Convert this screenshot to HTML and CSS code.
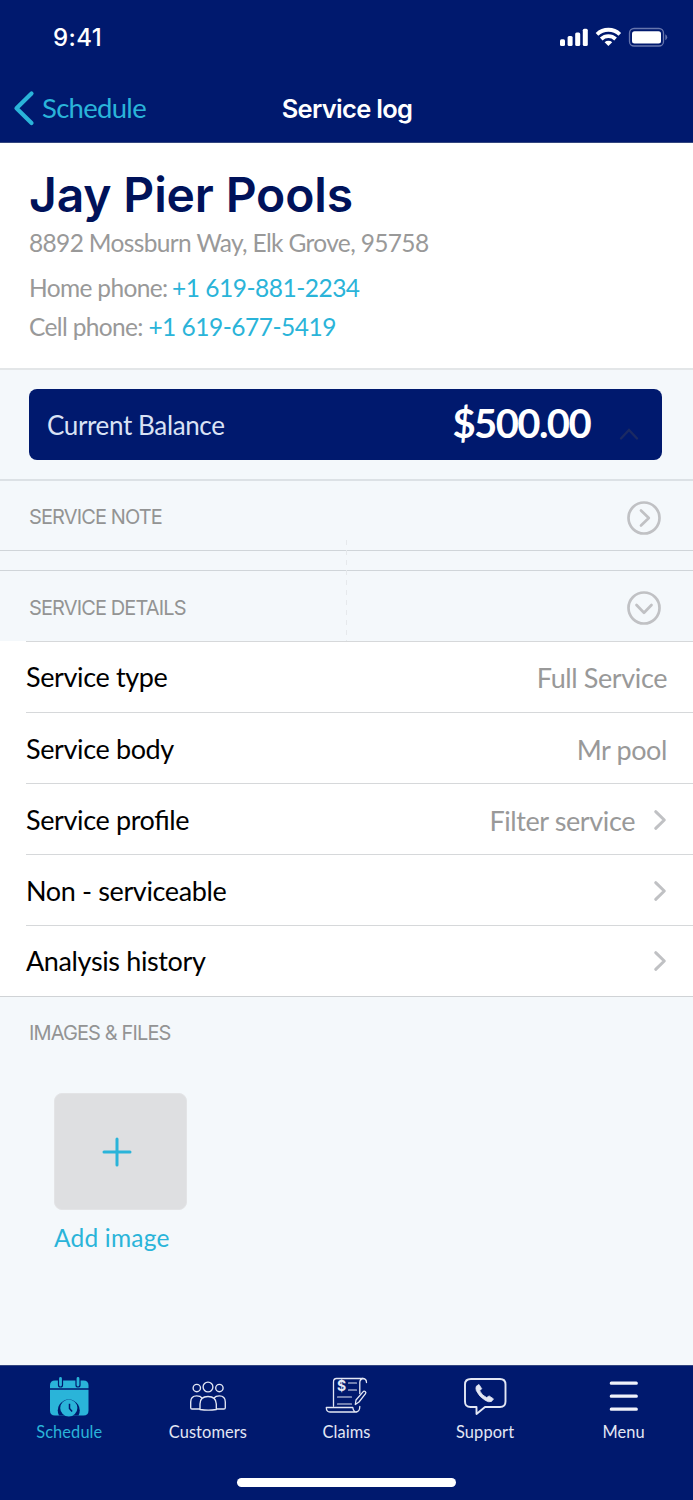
FILE: index.html
```html
<!DOCTYPE html>
<html lang="en">
<head>
<meta charset="utf-8">
<title>Service log</title>
<link rel="stylesheet" href="styles.css">
</head>
<body>
<div class="app">
  <header class="header">
    <div class="status">
      <span class="clock">9:41</span>
      <svg class="status-icons" width="112" height="22" viewBox="0 0 112 22" fill="#fff">
        <rect x="4" y="13.3" width="5" height="6.7" rx="1.5"/><rect x="11.6" y="10" width="5" height="10" rx="1.5"/><rect x="19.2" y="6.5" width="5" height="13.5" rx="1.5"/><rect x="26.8" y="2.7" width="5" height="17.3" rx="1.5"/>
        <g fill="none" stroke="#fff" stroke-width="3.8"><path d="M41 8.3a16.5 16.5 0 0 1 22.8 0"/><path d="M45.2 13a10.5 10.5 0 0 1 14.4 0"/></g>
        <path d="M48.6 16.3a5.6 5.6 0 0 1 7.6 0l-3.8 3.7z"/>
        <rect x="73.5" y="2.5" width="34" height="17.5" rx="4.5" fill="none" stroke="#6675ad" stroke-width="1.3"/><rect x="76" y="5.2" width="29" height="12.2" rx="2.5"/><path d="M109.3 8.3q1.9 1 1.9 3t-1.9 3z" fill="#6675ad"/>
      </svg>
    </div>
    <nav class="nav">
      <a class="back"><svg width="22" height="36" viewBox="0 0 22 36"><path d="M18.5 3.5 3.5 18.3 18.5 33" fill="none" stroke="#2ab4d9" stroke-width="4.2" stroke-linecap="round" stroke-linejoin="round"/></svg><span class="back-label">Schedule</span></a>
      <h1 class="title">Service log</h1>
    </nav>
  </header>

  <section class="customer">
    <h2 class="name">Jay Pier Pools</h2>
    <p class="line address">8892 Mossburn Way, Elk Grove, 95758</p>
    <p class="line home"><span>Home phone:</span> <a class="tel">+1 619-881-2234</a></p>
    <p class="line cell"><span>Cell phone:</span> <a class="tel">+1 619-677-5419</a></p>
  </section>

  <section class="balance-wrap">
    <div class="balance">
      <span class="balance-label">Current Balance</span>
      <span class="amount">$500.00</span>
      <svg class="balance-caret" width="22" height="14" viewBox="0 0 22 14"><path d="M3 11.5 11 3l8 8.5" fill="none" stroke="#1b2a63" stroke-width="2.4" stroke-linecap="round"/></svg>
    </div>
  </section>

  <section class="group note">
    <h3 class="caption">SERVICE NOTE</h3>
    <svg width="34" height="34" viewBox="0 0 34 34" class="round"><circle cx="17" cy="17" r="15.5"/><path d="m14 9.500 7.800 7.500-7.800 7.500"/></svg>
  </section>
  <div class="gap"></div>
  <section class="group details">
    <h3 class="caption">SERVICE DETAILS</h3>
    <svg width="34" height="34" viewBox="0 0 34 34" class="round"><circle cx="17" cy="17" r="15.5"/><path d="m9.500 14 7.500 7.800 7.500-7.800"/></svg>
    <i class="guide"></i>
  </section>

  <ul class="rows">
    <li class="row"><span class="key">Service type</span><span class="value">Full Service</span></li>
    <li class="row mid"><span class="key">Service body</span><span class="value">Mr pool</span></li>
    <li class="row mid"><span class="key">Service profile</span><span class="value">Filter service</span><svg class="chev" width="14" height="22" viewBox="0 0 14 22"><path d="m2.700 2.700 8.600 8.300-8.600 8.300"/></svg></li>
    <li class="row mid"><span class="key">Non - serviceable</span><svg class="chev" width="14" height="22" viewBox="0 0 14 22"><path d="m2.700 2.700 8.600 8.300-8.600 8.300"/></svg></li>
    <li class="row"><span class="key">Analysis history</span><svg class="chev" width="14" height="22" viewBox="0 0 14 22"><path d="m2.700 2.700 8.600 8.300-8.600 8.300"/></svg></li>
  </ul>

  <section class="files">
    <h3 class="caption">IMAGES &amp; FILES</h3>
    <div class="tile"><svg width="30" height="30" viewBox="0 0 30 30"><path d="M15 2v26M2 15h26" stroke="#2ab4d9" stroke-width="3" stroke-linecap="round"/></svg></div>
    <a class="add">Add image</a>
  </section>

  <footer class="tabbar">
    <div class="tabs">
      <div class="tab active">
        <svg class="icon" width="46" height="44" viewBox="0 0 46 44">
          <path d="M9 5.500h28.500q5 0 5 5V13.300H4V10.500q0-5 5-5z" fill="#2ab4d9"/><path d="M4 14.800h38.500V35.500q0 5-5 5H9q-5 0-5-5z" fill="#2ab4d9"/>
          <g stroke-linecap="round"><path d="M14.500 3.500v6.500M32 3.500v6.500" stroke="#00196e" stroke-width="5.200"/><path d="M14.500 3.500v6.500M32 3.500v6.500" stroke="#2ab4d9" stroke-width="2.800"/></g>
          <path d="M13 40.600a11 11 0 1 1 19.500 0z" fill="#00196e"/><circle cx="22.800" cy="33" r="8.600" fill="#2ab4d9"/><path d="M23.500 28.700v4.800l2.600 3" fill="none" stroke="#00196e" stroke-width="1.500"/>
        </svg>
        <span class="tab-label">Schedule</span>
      </div>
      <div class="tab">
        <svg class="icon" width="46" height="44" viewBox="0 0 46 44" fill="none" stroke="#e3e7f4" stroke-width="1.350">
          <circle cx="23" cy="12" r="4.900"/><circle cx="11.800" cy="13" r="3.700"/><circle cx="34.400" cy="13" r="3.700"/>
          <path d="M15 34.500V29q0-7.500 8-7.500t8.300 7.500v5.500q-8 1.200-16.300 0z"/><path d="M15 34H7q-1.300 0-1.300-1.300V27q0-6.200 6-6.200 3.800 0 5.300 2.200M31.300 34h7.500q1.500 0 1.500-1.300V27q0-6.200-6-6.200-3.600 0-5.300 2.200"/>
        </svg>
        <span class="tab-label">Customers</span>
      </div>
      <div class="tab">
        <svg class="icon" width="46" height="44" viewBox="0 0 46 44" fill="none" stroke="#e3e7f4" stroke-width="1.300" stroke-linecap="round" stroke-linejoin="round">
          <path d="M10.500 31V7q0-3.500 3-3.500h26q4 0 4 4M40 3.500q-3.200.7-3.200 4v11M36.800 31.500q0 5.500-4.300 5.500H7q-3.700 0-3.700-4.500h26.500q.6 4.500 4 4.500"/>
          <path d="M25.500 8h8M25.500 15h8M14.500 22h14M14.500 29h14" stroke-width="1.200"/>
          <path d="m33 25 7-8.200q1-1.200 2.200-.3 1.200 1 .3 2.200L36 27l-3.700 2.500z"/>
          <text class="dollar" x="14" y="16">$</text>
        </svg>
        <span class="tab-label">Claims</span>
      </div>
      <div class="tab">
        <svg class="icon" width="46" height="44" viewBox="0 0 46 44" fill="none" stroke="#e3e7f4" stroke-width="1.900" stroke-linejoin="round">
          <path d="M9 4H38q5.500 0 5.500 5.500v17Q43.500 32 38 32H23l-8.500 7v-7H8.500Q3 32 3 26.500v-17Q3 4 9 4z"/>
          <path d="m14.500 11 2.500-1.500 2.700 4.200-2 2.100q2.200 4.700 7 6.800l2.400-1.700 4.400 3-2 2.500q-2.500 1.200-6-.9-6.500-3.700-9.200-10-.9-2.500.2-4.500z" fill="#e3e7f4" stroke-width=".8"/>
        </svg>
        <span class="tab-label">Support</span>
      </div>
      <div class="tab">
        <svg class="icon" width="46" height="44" viewBox="0 0 46 44"><path d="M10.300 8.200h25M10.300 21.200h25M10.300 34.200h25" stroke="#f0f2fa" stroke-width="3.200" stroke-linecap="round"/></svg>
        <span class="tab-label">Menu</span>
      </div>
    </div>
    <div class="indicator"></div>
  </footer>
</div>
</body>
</html>
```
FILE: styles.css
```css
* { box-sizing: border-box; margin: 0; padding: 0; }
body { font-family: Lato, "Open Sans", sans-serif; background: #f4f8fb; color: #000; }
.app { width: 693px; height: 1500px; display: flex; flex-direction: column; background: #f4f8fb; overflow: hidden; }
svg { display: block; flex: none; }

.header { height: 143px; background: #00196e; border-bottom: 1px solid #33467f; }
.status { height: 74px; display: flex; justify-content: space-between; padding: 0 25px 0 53px; align-items: center; }
.clock { font: 500 24px/30px Inter, sans-serif; color: #fff; padding-top: 2px; letter-spacing: 0.4px; }
.nav { height: 68px; display: grid; grid-template-columns: 1fr auto 1fr; align-items: center; padding: 0 12px; }
.back { display: flex; align-items: center; gap: 7px; color: #2ab4d9; padding-left: 1px; }
.back-label { font-size: 27.5px; line-height: 34px; letter-spacing: -0.7px; }
.title { font: 600 25.5px/34px Inter, sans-serif; color: #fff; letter-spacing: -0.7px; padding: 2px 0 0 1px; }

.customer { height: 227px; background: #fff; border-bottom: 2px solid #e3e6e8; padding: 22px 29px 0; }
.name { font: 600 48px/60px Inter, sans-serif; color: #00125a; white-space: nowrap; letter-spacing: -0.15px; margin-bottom: 2px; }
.line { font-size: 24.5px; line-height: 32px; color: #999; white-space: nowrap; letter-spacing: -0.65px; }
.home { margin-top: 13px; }
.cell { margin-top: 7px; }
.tel { color: #2ab4d9; letter-spacing: -0.5px; margin-left: -1px; }
.cell .tel { margin-left: 0; }

.balance-wrap { height: 111px; padding: 19px 31px 0 29px; border-bottom: 2px solid #dce1e5; }
.balance { height: 71px; border-radius: 8px; background: #00196e; display: flex; align-items: center; padding: 0 22px 0 18px; }
.balance-label { font-size: 26px; color: #d9e2f5; flex: 1; letter-spacing: -0.37px; }
.amount { font-size: 40px; font-weight: 700; color: #fff; margin-right: 28px; letter-spacing: -1.6px; padding-bottom: 4px; }
.balance-caret { margin-top: 19px; }

.group { position: relative; display: flex; justify-content: space-between; align-items: center; padding: 4px 32px 0 29px; }
.note { height: 70px; border-bottom: 1px solid #d0d5d9; }
.note .caption { padding-bottom: 2px; }
.gap { height: 20px; border-bottom: 1px solid #d0d5d9; }
.details { height: 70px; }
.caption { font: 400 20px/26px Inter, sans-serif; color: #939494; letter-spacing: -0.88px; }
.round { fill: none; stroke: #c0c1c4; stroke-width: 2.7; stroke-linecap: round; stroke-linejoin: round; }
.guide { position: absolute; left: 346px; top: -31px; width: 1px; height: 101px; background: repeating-linear-gradient(#e6e9ec 0 5px, transparent 5px 10px); }

.rows { list-style: none; background: #fff; padding-left: 26px; border-bottom: 1px solid #d0d3d6; height: 356px; }
.row { height: 71px; border-top: 1px solid #d6d8da; display: flex; align-items: center; padding-right: 26px; }
.mid { padding-top: 2px; }
.key { font-size: 27px; line-height: 34px; flex: 1; letter-spacing: -0.37px; font-feature-settings: "liga" 1; }
.value { font-size: 27px; line-height: 34px; color: #999; letter-spacing: -0.4px; padding-top: 2px; }
.chev { fill: none; stroke: #c0c1c4; stroke-width: 3; stroke-linecap: round; stroke-linejoin: round; margin-left: 18px; }

.files { flex: 1; padding: 23px 29px 0; }
.tile { width: 133px; height: 117px; margin: 47px 0 0 25px; border-radius: 8px; background: #dedfe1; border: 1px solid #e3e4e6; display: flex; align-items: center; justify-content: center; padding-right: 8px; }
.add { display: block; margin: 11px 0 0 25px; font-size: 24.5px; line-height: 34px; color: #2ab4d9; letter-spacing: 0.2px; }

.tabbar { height: 135px; background: #00196e; border-top: 1px solid #33467f; }
.tabs { display: grid; grid-template-columns: repeat(5, 1fr); height: 112px; padding-top: 9px; }
.tab { display: flex; flex-direction: column; align-items: center; color: #e3e7f4; }
.tab-label { font-size: 16.4px; line-height: 22px; margin-top: 2px; letter-spacing: 0.1px; }
.active { color: #2ab4d9; }
.dollar { font: 700 14px Inter, sans-serif; fill: #e3e7f4; stroke: none; }
.indicator { width: 219px; height: 9px; border-radius: 5px; background: #fff; margin: 0 auto; }
```
